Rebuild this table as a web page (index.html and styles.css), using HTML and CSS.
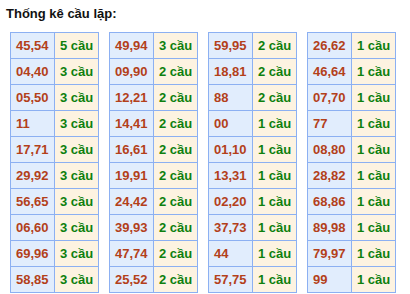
FILE: index.html
```html
<!DOCTYPE html>
<html lang="vi">
<head>
<meta charset="utf-8">
<title>Thống kê cầu lặp</title>
<link rel="stylesheet" href="styles.css">
</head>
<body>
<h3 class="title">Thống kê cầu lặp:</h3>
<div class="tables">
  <table class="stat">
    <tr><td class="num">45,54</td><td class="cnt">5 cầu</td></tr>
    <tr><td class="num">04,40</td><td class="cnt">3 cầu</td></tr>
    <tr><td class="num">05,50</td><td class="cnt">3 cầu</td></tr>
    <tr><td class="num">11</td><td class="cnt">3 cầu</td></tr>
    <tr><td class="num">17,71</td><td class="cnt">3 cầu</td></tr>
    <tr><td class="num">29,92</td><td class="cnt">3 cầu</td></tr>
    <tr><td class="num">56,65</td><td class="cnt">3 cầu</td></tr>
    <tr><td class="num">06,60</td><td class="cnt">3 cầu</td></tr>
    <tr><td class="num">69,96</td><td class="cnt">3 cầu</td></tr>
    <tr><td class="num">58,85</td><td class="cnt">3 cầu</td></tr>
  </table>
  <table class="stat">
    <tr><td class="num">49,94</td><td class="cnt">3 cầu</td></tr>
    <tr><td class="num">09,90</td><td class="cnt">2 cầu</td></tr>
    <tr><td class="num">12,21</td><td class="cnt">2 cầu</td></tr>
    <tr><td class="num">14,41</td><td class="cnt">2 cầu</td></tr>
    <tr><td class="num">16,61</td><td class="cnt">2 cầu</td></tr>
    <tr><td class="num">19,91</td><td class="cnt">2 cầu</td></tr>
    <tr><td class="num">24,42</td><td class="cnt">2 cầu</td></tr>
    <tr><td class="num">39,93</td><td class="cnt">2 cầu</td></tr>
    <tr><td class="num">47,74</td><td class="cnt">2 cầu</td></tr>
    <tr><td class="num">25,52</td><td class="cnt">2 cầu</td></tr>
  </table>
  <table class="stat">
    <tr><td class="num">59,95</td><td class="cnt">2 cầu</td></tr>
    <tr><td class="num">18,81</td><td class="cnt">2 cầu</td></tr>
    <tr><td class="num">88</td><td class="cnt">2 cầu</td></tr>
    <tr><td class="num">00</td><td class="cnt">1 cầu</td></tr>
    <tr><td class="num">01,10</td><td class="cnt">1 cầu</td></tr>
    <tr><td class="num">13,31</td><td class="cnt">1 cầu</td></tr>
    <tr><td class="num">02,20</td><td class="cnt">1 cầu</td></tr>
    <tr><td class="num">37,73</td><td class="cnt">1 cầu</td></tr>
    <tr><td class="num">44</td><td class="cnt">1 cầu</td></tr>
    <tr><td class="num">57,75</td><td class="cnt">1 cầu</td></tr>
  </table>
  <table class="stat">
    <tr><td class="num">26,62</td><td class="cnt">1 cầu</td></tr>
    <tr><td class="num">46,64</td><td class="cnt">1 cầu</td></tr>
    <tr><td class="num">07,70</td><td class="cnt">1 cầu</td></tr>
    <tr><td class="num">77</td><td class="cnt">1 cầu</td></tr>
    <tr><td class="num">08,80</td><td class="cnt">1 cầu</td></tr>
    <tr><td class="num">28,82</td><td class="cnt">1 cầu</td></tr>
    <tr><td class="num">68,86</td><td class="cnt">1 cầu</td></tr>
    <tr><td class="num">89,98</td><td class="cnt">1 cầu</td></tr>
    <tr><td class="num">79,97</td><td class="cnt">1 cầu</td></tr>
    <tr><td class="num">99</td><td class="cnt">1 cầu</td></tr>
  </table>
</div>
</body>
</html>
```
FILE: styles.css
```css
html, body {
  margin: 0;
  padding: 0;
  background: #ffffff;
}
body {
  font-family: "Liberation Sans", Arial, sans-serif;
  font-size: 13px;
}
.title {
  margin: 0;
  padding: 6px 6px 0;
  font-size: 13px;
  line-height: 16px;
  font-weight: bold;
  color: #111111;
}
.tables {
  display: flex;
  gap: 10px;
  padding: 10px 0 0 10px;
}
.stat {
  border-collapse: collapse;
  table-layout: fixed;
  width: 89px;
  flex: none;
}
.stat tr {
  height: 26px;
}
.stat td {
  box-sizing: border-box;
  border: 1px solid #8cb0f2;
  padding: 0 0 0 5px;
  font-weight: bold;
  font-size: 13px;
  line-height: 15px;
  vertical-align: middle;
  white-space: nowrap;
  overflow: hidden;
}
.num {
  width: 44px;
  background: #e1edfd;
  color: #b3401a;
}
.cnt {
  background: #fdf3e1;
  color: #0e800e;
}
```
